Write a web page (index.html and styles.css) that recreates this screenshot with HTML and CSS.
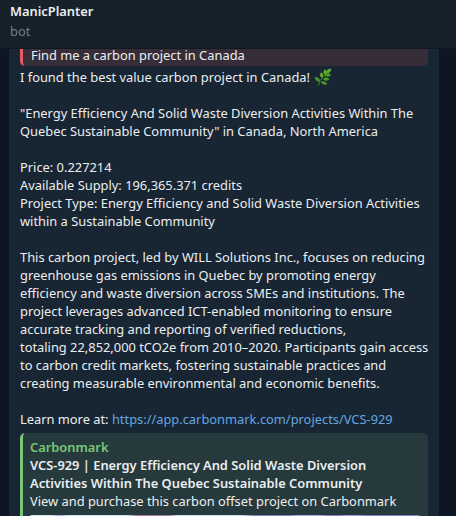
FILE: index.html
```
<!DOCTYPE html>
<html lang="en">
<head>
    <meta charset="UTF-8">
    <meta name="viewport" content="width=device-width, initial-scale=1.0">
    <title>ManicPlanter</title>
    <link rel="stylesheet" href="styles.css">
</head>
<body>
    <header class="chat-header">
        <h1>ManicPlanter</h1>
        <div class="status">bot</div>
    </header>

    <main class="chat">
        <div class="message">
            <div class="reply">Find me a carbon project in Canada</div>

            <div class="text">
                <p>I found the best value carbon project in Canada! <svg class="herb" viewBox="0 0 18 18"><path d="M4.5 17.5C5 13 9 8 16 2" fill="none" stroke="#4a8f25" stroke-width="1"/><g fill="#62b02e"><path d="M17.3.7C13.5.8 11.8 2.5 12.4 5.4 15.4 5.4 17 4 17.3.7Z"/><path d="M11.1 1.2C8.8 3.2 8.8 5.4 11.2 7.2 13 5 13 3 11.1 1.2Z"/><path d="M7.2 4.2C5.3 6.8 5.9 8.9 8.5 10 9.9 7.4 9.5 5.6 7.2 4.2Z"/></g><g fill="#4c9a26"><path d="M.8 9C1.2 12.4 2.9 13.8 6 13.3 5.9 10.6 4.2 9 .8 9Z"/><path d="M17.3 6.4C14.2 4.8 12 5.4 10.9 7.8 13.4 9.4 15.6 8.9 17.3 6.4Z"/><path d="M15.7 11.3C13.3 8.9 10.8 8.8 8.9 10.9 10.9 13.1 13.2 13.2 15.7 11.3Z"/><path d="M13.4 16.2C11.8 13.3 9.4 12.5 6.8 13.9 8.2 16.5 10.5 17.3 13.4 16.2Z"/></g></svg></p>
                <p>"Energy Efficiency And Solid Waste Diversion Activities Within The<br>Quebec Sustainable Community" in Canada, North America</p>
                <p>Price: 0.227214<br>
                Available Supply: 196,365.371 credits<br>
                Project Type: Energy Efficiency and Solid Waste Diversion Activities<br>within a Sustainable Community</p>
                <p>This carbon project, led by WILL Solutions Inc., focuses on reducing<br>greenhouse gas emissions in Quebec by promoting energy<br>efficiency and waste diversion across SMEs and institutions. The<br>project leverages advanced ICT-enabled monitoring to ensure<br>accurate tracking and reporting of verified reductions,<br>totaling 22,852,000 tCO2e from 2010–2020. Participants gain access<br>to carbon credit markets, fostering sustainable practices and<br>creating measurable environmental and economic benefits.</p>
                <p>Learn more at: <a href="#">https://app.carbonmark.com/projects/VCS-929</a></p>
            </div>

            <div class="preview">
                <div class="site">Carbonmark</div>
                <div class="title">VCS-929 | Energy Efficiency And Solid Waste Diversion<br>Activities Within The Quebec Sustainable Community</div>
                <div class="description">View and purchase this carbon offset project on Carbonmark</div>
                <div class="cover"></div>
            </div>
        </div>
    </main>
</body>
</html>
```
FILE: styles.css
```
* {
    margin: 0;
    padding: 0;
    box-sizing: border-box;
}

body {
    height: 516px;
    overflow: hidden;
    display: flex;
    flex-direction: column;
    background: #0e1621;
    color: #ebeef0;
    font: 12.87px/18px "Noto Sans", "Open Sans", sans-serif;
    white-space: nowrap;
}

.chat-header {
    height: 48px;
    flex-shrink: 0;
    padding: 1px 10px;
    background: #17212b;
}

.chat-header h1 {
    font-size: 12.87px;
    font-weight: 600;
    line-height: 20px;
}

.status {
    line-height: 20px;
    color: #6d7f8f;
}

.chat {
    flex: 1;
    min-height: 0;
    padding: 0 17px 0 9px;
    border-top: 1px solid #101921;
}

.message {
    height: 467px;
    padding: 0 11px;
    background: #182533;
}

.reply {
    height: 17px;
    padding-left: 8px;
    line-height: 12px;
    background: #362d38;
    border-left: 3px solid #e45c64;
    border-radius: 0 0 5px 5px;
}

.text {
    padding-top: 2px;
}

.text p {
    margin-bottom: 18px;
}

.text p:last-child {
    margin-bottom: 5px;
}

.herb {
    width: 18px;
    height: 18px;
    margin-left: 1px;
    vertical-align: top;
}

a {
    color: #64a6e0;
    text-decoration: none;
}

.preview {
    height: 150px;
    padding: 5px 8px 0 7px;
    background: #263a3d;
    border-left: 3px solid #78c877;
    border-radius: 5px;
}

.site {
    font-weight: 600;
    color: #78c877;
}

.title {
    font-weight: 600;
}

.cover {
    height: 60px;
    margin-top: 5px;
    border-radius: 2px;
    background: linear-gradient(90deg, #d2edf0 0 20px, #a9b5ee 26px 32px, #c8e8f3 40px 98px, #a67ba5 106px 138px, #c6e2f5 148px 212px, #837bbb 224px 258px, #b1b0ed 268px 290px, #8a77be 298px 308px, #a6a0e4 316px 326px, #8b80ca 336px 100%);
}
```
